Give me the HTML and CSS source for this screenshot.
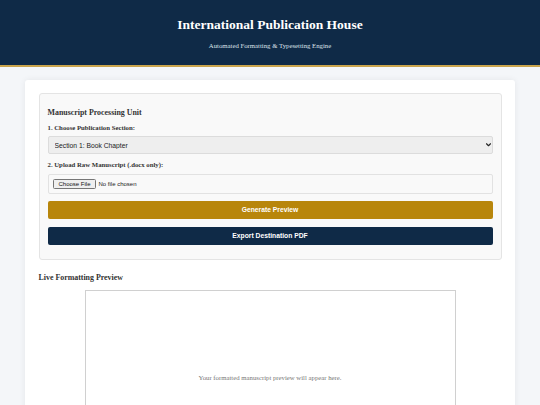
FILE: index.html
```html
<!DOCTYPE html>
<html lang="en">
<head>
<meta charset="utf-8">
<title>International Publication House</title>
<link rel="stylesheet" href="styles.css">
</head>
<body>
<header class="site-header">
  <h1 class="site-title">International Publication House</h1>
  <p class="site-subtitle">Automated Formatting &amp; Typesetting Engine</p>
</header>
<main class="container">
  <section class="panel">
    <h3 class="panel-title">Manuscript Processing Unit</h3>
    <label class="field-label" for="section">1. Choose Publication Section:</label>
    <div class="select-wrap">
      <select id="section" class="select">
        <option>Section 1: Book Chapter</option>
        <option>Section 2: Journal Article</option>
      </select>
      <svg class="select-arrow" width="5" height="4" viewBox="0 0 10 8" aria-hidden="true">
        <path d="M1 1.5 L5 5.5 L9 1.5" fill="none" stroke="#222" stroke-width="2.2" stroke-linecap="round" stroke-linejoin="round"/>
      </svg>
    </div>
    <label class="field-label">2. Upload Raw Manuscript (.docx only):</label>
    <div class="file-box">
      <span class="file-btn">Choose File</span>
      <span class="file-name">No file chosen</span>
    </div>
    <button class="btn btn-gold">Generate Preview</button>
    <button class="btn btn-navy">Export Destination PDF</button>
  </section>
  <h3 class="preview-title">Live Formatting Preview</h3>
  <div class="preview-box">
    <p class="preview-placeholder">Your formatted manuscript preview will appear here.</p>
  </div>
</main>
</body>
</html>
```
FILE: styles.css
```css
* { box-sizing: border-box; }
html, body { margin: 0; padding: 0; }
body {
  background: #f4f6f9;
  font-family: "Liberation Serif", "Times New Roman", serif;
  color: #333;
}
.site-header {
  background: #0f2a47;
  border-bottom: 2px solid #c9a44c;
  text-align: center;
  padding: 17px 0 16px;
}
.site-title {
  margin: 0;
  font-size: 13.5px;
  font-weight: bold;
  color: #ffffff;
  line-height: normal;
}
.site-subtitle {
  margin: 9px 0 0;
  font-size: 6.75px;
  color: #dde2ea;
  line-height: normal;
}
.container {
  max-width: 490px;
  margin: 12.5px auto 0;
  background: #ffffff;
  border-radius: 3px;
  box-shadow: 0 0 6px rgba(0, 0, 0, 0.07);
  padding: 13px 13.5px 30px;
}
.panel {
  background: #f9f9f9;
  border: 1px solid #e4e4e4;
  border-radius: 3px;
  padding: 14.5px 8px 14px;
  display: flex;
  flex-direction: column;
}
.panel-title, .preview-title {
  margin: 0;
  font-size: 7.9px;
  font-weight: bold;
  color: #333;
  line-height: normal;
}
.field-label {
  display: block;
  margin: 6.5px 0 5.5px;
  font-size: 6.75px;
  font-weight: bold;
  color: #333;
  line-height: normal;
}
.select-wrap {
  position: relative;
  margin: 0 0 0.5px;
}
.select {
  display: block;
  -webkit-appearance: none;
  appearance: none;
  height: 18px;
  width: 100%;
  font-family: "Liberation Sans", Arial, sans-serif;
  font-size: 6.75px;
  color: #222;
  background-color: #eeeeee;
  border: 1px solid #dcdcdc;
  border-radius: 2px;
  padding: 0 6px;
  margin: 0;
}
.select-arrow {
  position: absolute;
  right: 2px;
  top: 7px;
  pointer-events: none;
}
.file-box {
  display: flex;
  align-items: center;
  gap: 2.5px;
  height: 20.5px;
  padding: 0 4.5px;
  background: #f9f9f9;
  border: 1px solid #e2e2e2;
  border-radius: 2px;
  font-family: "Liberation Sans", Arial, sans-serif;
  font-size: 6px;
  color: #222;
}
.file-btn {
  display: inline-flex;
  align-items: center;
  height: 9.5px;
  padding: 0 4.5px;
  background: #efefef;
  border: 1px solid #767676;
  border-radius: 1.5px;
  color: #111;
}
.btn {
  display: block;
  width: 100%;
  height: 18px;
  border: none;
  border-radius: 2px;
  font-family: "Liberation Sans", Arial, sans-serif;
  font-size: 6.75px;
  font-weight: bold;
  color: #ffffff;
  padding: 0;
}
.btn-gold {
  background: #b8860b;
  margin-top: 6.5px;
}
.btn-navy {
  background: #0f2a47;
  margin-top: 8px;
}
.preview-title {
  margin-top: 13px;
}
.preview-box {
  width: 371px;
  min-height: 174px;
  margin: 8.5px auto 0;
  background: #ffffff;
  border: 1px solid #d0d0d0;
  display: flex;
  align-items: center;
  justify-content: center;
}
.preview-placeholder {
  margin: 0;
  font-size: 6.75px;
  color: #777;
}
```
